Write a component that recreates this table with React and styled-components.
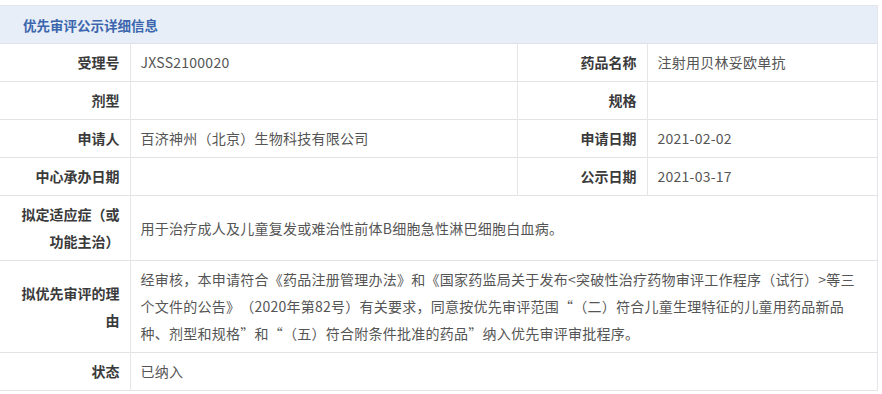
import React from "react";
import styled, { createGlobalStyle } from "styled-components";

const Global = createGlobalStyle`
  html, body { margin: 0; padding: 0; background: #fff; }
  body {
    font-family: "Noto Sans CJK SC", "Noto Sans", sans-serif;
    text-spacing-trim: space-all;
  }
`;

const Wrap = styled.div`
  padding-top: 5px;
  width: 878px;
`;

const Panel = styled.div`
  border-top: 1px solid #e3e6ea;
  border-right: 1px solid #e3e6ea;
`;

const Header = styled.div`
  height: 37px;
  background: #e7eef8;
  border-bottom: 1px solid #dfe3e8;
  display: flex;
  align-items: center;
  padding-left: 23px;
  font-size: 13.5px;
  font-weight: 700;
  color: #3b66ad;
`;

const Table = styled.table`
  width: 100%;
  border-collapse: collapse;
  table-layout: fixed;
`;

const Row = styled.tr`
  border-bottom: 1px solid #e3e3e3;
`;

const Label = styled.th`
  text-align: right;
  padding: 5px 10px;
  font-size: 14px;
  line-height: 27px;
  font-weight: 700;
  color: #3a3a3a;
  border-right: 1px solid #e6e6e6;
  vertical-align: middle;
`;

const Value = styled.td`
  text-align: left;
  padding: 5px 8px 5px 10px;
  font-size: 14px;
  line-height: 27px;
  font-weight: 400;
  letter-spacing: 0.25px;
  color: #555;
  border-right: ${(p) => (p.$last ? "none" : "1px solid #e6e6e6")};
  vertical-align: middle;
`;

const Line = styled.span`
  display: block;
  white-space: nowrap;
`;

export default function App() {
  return (
    <>
      <Global />
      <Wrap>
        <Panel>
          <Header>优先审评公示详细信息</Header>
          <Table>
            <colgroup>
              <col style={{ width: 130 }} />
              <col style={{ width: 387 }} />
              <col style={{ width: 130 }} />
              <col />
            </colgroup>
            <tbody>
              <Row>
                <Label>受理号</Label>
                <Value>JXSS2100020</Value>
                <Label>药品名称</Label>
                <Value $last>注射用贝林妥欧单抗</Value>
              </Row>
              <Row>
                <Label>剂型</Label>
                <Value></Value>
                <Label>规格</Label>
                <Value $last></Value>
              </Row>
              <Row>
                <Label>申请人</Label>
                <Value>百济神州（北京）生物科技有限公司</Value>
                <Label>申请日期</Label>
                <Value $last>2021-02-02</Value>
              </Row>
              <Row>
                <Label>中心承办日期</Label>
                <Value></Value>
                <Label>公示日期</Label>
                <Value $last>2021-03-17</Value>
              </Row>
              <Row>
                <Label>拟定适应症（或功能主治）</Label>
                <Value colSpan={3} $last>
                  用于治疗成人及儿童复发或难治性前体B细胞急性淋巴细胞白血病。
                </Value>
              </Row>
              <Row>
                <Label>拟优先审评的理由</Label>
                <Value colSpan={3} $last>
                  <Line>经审核，本申请符合《药品注册管理办法》和《国家药监局关于发布&lt;突破性治疗药物审评工作程序（试行）&gt;等三</Line>
                  <Line>个文件的公告》（2020年第82号）有关要求，同意按优先审评范围“（二）符合儿童生理特征的儿童用药品新品</Line>
                  <Line>种、剂型和规格”和“（五）符合附条件批准的药品”纳入优先审评审批程序。</Line>
                </Value>
              </Row>
              <Row>
                <Label>状态</Label>
                <Value colSpan={3} $last>已纳入</Value>
              </Row>
            </tbody>
          </Table>
        </Panel>
      </Wrap>
    </>
  );
}
